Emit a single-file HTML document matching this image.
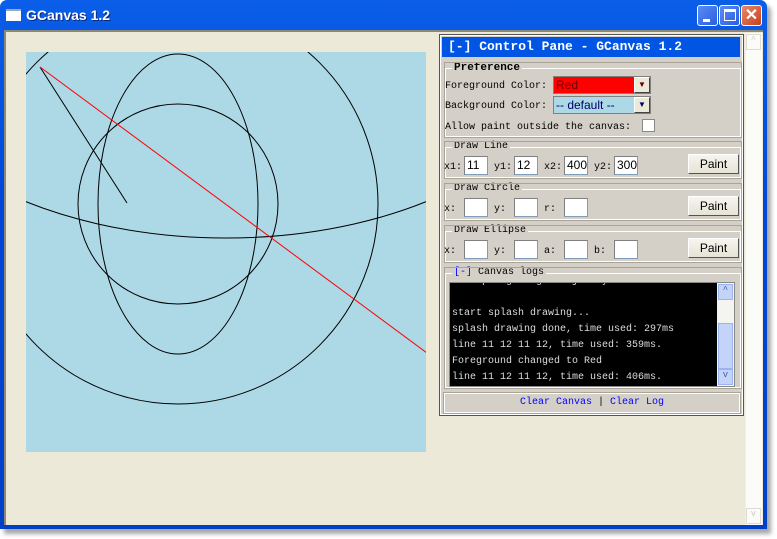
<!DOCTYPE html>
<html><head><style>
*{margin:0;padding:0;box-sizing:border-box}
body{width:777px;height:539px;background:#fff;position:relative;overflow:hidden;font-family:"Liberation Mono",monospace}
.abs{position:absolute}
#win{left:0;top:0;width:767px;height:529px;background:linear-gradient(#0a5ee8,#0046d8 40%,#0040c8);border-radius:7px 7px 0 0;box-shadow:4px 5px 4px rgba(0,0,0,.35)}
#title{left:26px;top:7px;color:#fff;font:bold 14px "Liberation Sans",sans-serif;text-shadow:1px 1px #0a2a80}
#client{left:4px;top:30px;width:759px;height:495px;background:#ECE9D8;border-left:2px solid #8a8878;border-top:2px solid #8a8878}
.tb{top:5px;width:21px;height:21px;border:1px solid #fff;border-radius:3px;background:linear-gradient(135deg,#5a8cf5,#2a5ee0)}
fieldset{position:absolute;border:1px solid #fff;outline:1px solid #a8a498;left:4px;width:296px}
legend{font-size:10px;margin-left:6px;padding:0 2px;line-height:10px}
.lbl{position:absolute;font-size:10px;color:#000;white-space:nowrap}
.in{position:absolute;width:24px;height:19px;background:#fff;border:1px solid #7f9db9;border-top-color:#808080;border-left-color:#808080;font:12px "Liberation Sans",sans-serif;padding-left:2px;line-height:17px}
.btn{position:absolute;right:3px;width:51px;height:20px;background:linear-gradient(#f6f5ee,#e6e3d6);border:1px solid #fff;border-right-color:#555;border-bottom-color:#555;font:12px "Liberation Sans",sans-serif;text-align:center;line-height:18px}
.sel{position:absolute;left:112px;width:98px;height:18px;border:1px solid #808080;font:12px "Liberation Sans",sans-serif;line-height:16px;padding-left:2px}
.arr{position:absolute;right:0;top:0;width:16px;height:16px;background:#ece9d8;border:1px solid #fff;border-right-color:#444;border-bottom-color:#444;font-size:8px;text-align:center;line-height:14px}
</style></head><body>
<div id="win" class="abs"></div>
<div class="abs" style="left:6px;top:9px;width:15px;height:12px;background:#fff;border-top:2px solid #9ab"></div>
<div id="title" class="abs">GCanvas 1.2</div>
<div class="abs tb" style="left:697px"><div class="abs" style="left:5px;top:13px;width:7px;height:3px;background:#fff"></div></div>
<div class="abs tb" style="left:719px"><div class="abs" style="left:4px;top:3px;width:12px;height:12px;border:1px solid #fff;border-top-width:3px"></div></div>
<div class="abs tb" style="left:741px;background:linear-gradient(135deg,#e8886a,#c8401c);color:#fff;font:bold 16px 'Liberation Sans';text-align:center;line-height:19px">✕</div>
<div id="client" class="abs"></div>
<div class="abs" style="left:745px;top:33px;width:17px;height:492px;background:#fbfbf7;border-left:1px solid #eee"></div>
<div class="abs" style="left:746px;top:34px;width:15px;height:16px;border:1px solid #dcdcd4;color:#ccc;font-size:9px;text-align:center">^</div>
<div class="abs" style="left:746px;top:508px;width:15px;height:16px;border:1px solid #dcdcd4;color:#ccc;font-size:9px;text-align:center">v</div>

<svg class="abs" style="left:26px;top:52px" width="400" height="400" viewBox="0 0 400 400">
<rect width="400" height="400" fill="#ADD8E6"/>
<g fill="none" stroke="#000" stroke-width="1">
<line x1="14" y1="15" x2="101" y2="151"/>
<ellipse cx="152" cy="152" rx="80" ry="150"/>
<circle cx="152" cy="152" r="100"/>
<circle cx="152" cy="152" r="200"/>
<ellipse cx="200" cy="-14" rx="348" ry="200"/>
</g>
<line x1="14" y1="15" x2="401" y2="301" stroke="#f00"/>
</svg>

<div class="abs" style="left:440px;top:35px;width:303px;height:380px;background:#d4d0c8;border:1px solid #fff;outline:1px solid #555">
<div class="abs" style="left:1px;top:1px;width:298px;height:20px;background:#0055e5;color:#fff;font:bold 13px 'Liberation Mono',monospace;line-height:20px;padding-left:6px">[-] Control Pane - GCanvas 1.2</div>
<fieldset style="top:27px;height:74px"><legend style="font-weight:bold;font-size:11px">Preference</legend></fieldset>
<div class="lbl" style="left:4px;top:45px">Foreground Color:</div>
<div class="sel" style="top:40px;background:#f00;color:#600">Red<div class="arr">▼</div></div>
<div class="lbl" style="left:4px;top:65px">Background Color:</div>
<div class="sel" style="top:60px;background:#add8e6;color:#006">-- default --<div class="arr">▼</div></div>
<div class="lbl" style="left:4px;top:86px">Allow paint outside the canvas:</div>
<div class="abs" style="left:201px;top:83px;width:13px;height:13px;background:#fff;border:1px solid #888"></div>

<fieldset style="top:106px;height:36px"><legend>Draw Line</legend></fieldset>
<div class="lbl" style="left:3px;top:126px">x1:</div><div class="in" style="left:23px;top:120px">11</div>
<div class="lbl" style="left:53px;top:126px">y1:</div><div class="in" style="left:73px;top:120px">12</div>
<div class="lbl" style="left:103px;top:126px">x2:</div><div class="in" style="left:123px;top:120px">400</div>
<div class="lbl" style="left:153px;top:126px">y2:</div><div class="in" style="left:173px;top:120px">300</div>
<div class="btn" style="top:118px">Paint</div>

<fieldset style="top:148px;height:36px"><legend>Draw Circle</legend></fieldset>
<div class="lbl" style="left:3px;top:168px">x:</div><div class="in" style="left:23px;top:162px"></div>
<div class="lbl" style="left:53px;top:168px">y:</div><div class="in" style="left:73px;top:162px"></div>
<div class="lbl" style="left:103px;top:168px">r:</div><div class="in" style="left:123px;top:162px"></div>
<div class="btn" style="top:160px">Paint</div>

<fieldset style="top:190px;height:36px"><legend>Draw Ellipse</legend></fieldset>
<div class="lbl" style="left:3px;top:210px">x:</div><div class="in" style="left:23px;top:204px"></div>
<div class="lbl" style="left:53px;top:210px">y:</div><div class="in" style="left:73px;top:204px"></div>
<div class="lbl" style="left:103px;top:210px">a:</div><div class="in" style="left:123px;top:204px"></div>
<div class="lbl" style="left:153px;top:210px">b:</div><div class="in" style="left:173px;top:204px"></div>
<div class="btn" style="top:202px">Paint</div>

<fieldset style="top:232px;height:120px"><legend><span style="color:#00f">[-]</span> Canvas logs</legend></fieldset>
<div class="abs" style="left:8px;top:246px;width:286px;height:105px;background:#000;border:1px solid #888;overflow:hidden">
<div style="color:#ddd;font-size:10px;line-height:16px;padding-left:2px;margin-top:-9px;white-space:pre"># http://greatghoul.javaeye.com

start splash drawing...
splash drawing done, time used: 297ms
line 11 12 11 12, time used: 359ms.
Foreground changed to Red
line 11 12 11 12, time used: 406ms.</div>
<div class="abs" style="right:0;top:0;width:17px;height:103px;background:#f4f4f0">
<div class="abs" style="left:1px;top:1px;width:15px;height:16px;background:#c4d4f8;border:1px solid #9ab4f0;font-size:9px;color:#4060a0;text-align:center">^</div>
<div class="abs" style="left:1px;top:40px;width:15px;height:46px;background:#c4d4f8;border:1px solid #9ab4f0"></div>
<div class="abs" style="left:1px;top:86px;width:15px;height:16px;background:#c4d4f8;border:1px solid #9ab4f0;font-size:9px;color:#4060a0;text-align:center">v</div>
</div></div>

<div class="abs" style="left:3px;top:357px;width:296px;height:20px;border:1px solid #fff;outline:1px solid #a8a498;text-align:center;font-size:10px;line-height:18px;color:#00f">Clear Canvas <span style="color:#000">|</span>  Clear Log</div>
</div>
</body></html>
